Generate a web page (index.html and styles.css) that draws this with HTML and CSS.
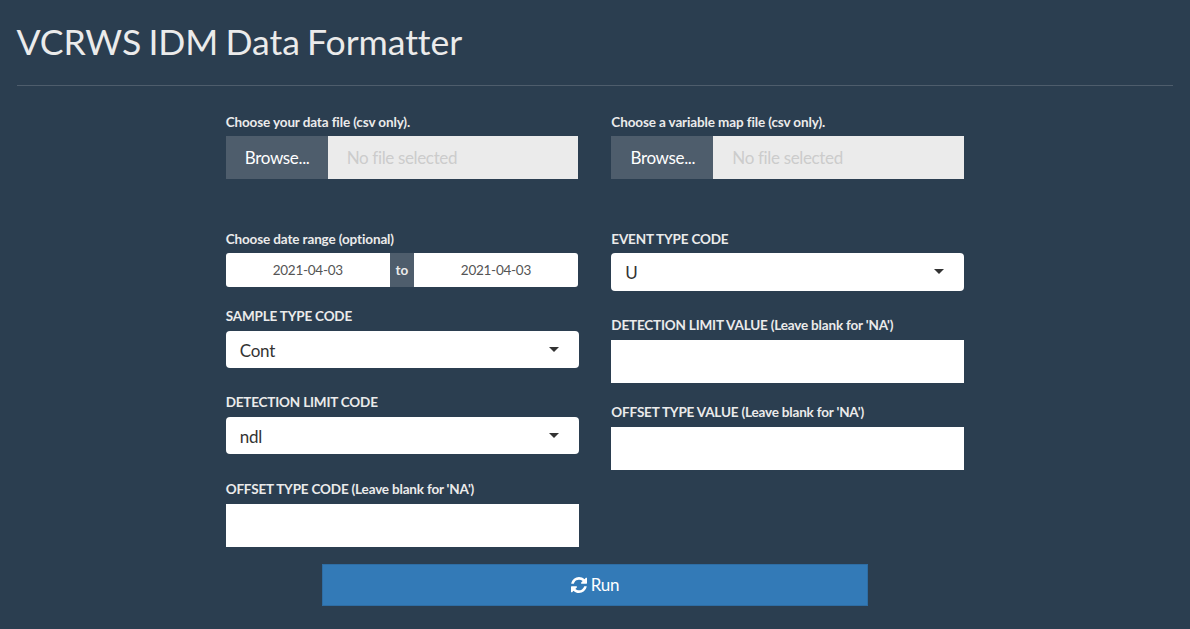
FILE: index.html
```html
<!DOCTYPE html>
<html lang="en">
<head>
<meta charset="utf-8">
<title>VCRWS IDM Data Formatter</title>
<link rel="stylesheet" href="styles.css">
</head>
<body>
<header class="page-header"><h1 class="title">VCRWS IDM Data Formatter</h1></header>
<main class="form">
  <div class="columns">
    <section class="column">
      <div class="field field-file">
        <div class="label">Choose your data file (csv only).</div>
        <div class="file"><span class="browse">Browse...</span><span class="filename">No file selected</span></div>
      </div>
      <div class="field field-dates">
        <div class="label">Choose date range (optional)</div>
        <div class="dates"><span class="date date-start">2021-04-03</span><span class="to">to</span><span class="date date-end">2021-04-03</span></div>
      </div>
      <div class="field">
        <div class="label label-code">SAMPLE TYPE CODE</div>
        <div class="select"><span>Cont</span><i class="caret"></i></div>
      </div>
      <div class="field field-limit">
        <div class="label label-code">DETECTION LIMIT CODE</div>
        <div class="select"><span>ndl</span><i class="caret"></i></div>
      </div>
      <div class="field">
        <div class="label label-code">OFFSET TYPE CODE (Leave blank for 'NA')</div>
        <div class="text-input"></div>
      </div>
    </section>
    <section class="column">
      <div class="field field-file">
        <div class="label">Choose a variable map file (csv only).</div>
        <div class="file"><span class="browse">Browse...</span><span class="filename">No file selected</span></div>
      </div>
      <div class="field field-event">
        <div class="label label-code">EVENT TYPE CODE</div>
        <div class="select"><span>U</span><i class="caret"></i></div>
      </div>
      <div class="field field-limit">
        <div class="label label-code">DETECTION LIMIT VALUE (Leave blank for 'NA')</div>
        <div class="text-input"></div>
      </div>
      <div class="field">
        <div class="label label-code">OFFSET TYPE VALUE (Leave blank for 'NA')</div>
        <div class="text-input"></div>
      </div>
    </section>
  </div>
  <button class="run" type="button">
    <svg class="run-icon" viewBox="0 0 1536 1536"><path fill="currentColor" d="M1511 928q0 5-1 7-64 268-268 434.5t-478 166.5q-146 0-282.500-55t-243.500-157l-129 129q-19 19-45 19t-45-19-19-45v-448q0-26 19-45t45-19h448q26 0 45 19t19 45-19 45l-137 137q71 66 161 102t187 36q134 0 250-65t186-179q11-17 53-117 8-23 30-23h192q13 0 22.500 9.500t9.500 22.500zm25-800v448q0 26-19 45t-45 19h-448q-26 0-45-19t-19-45 19-45l138-138q-148-137-349-137-134 0-250 65t-186 179q-11 17-53 117-8 23-30 23h-199q-13 0-22.500-9.500t-9.500-22.500v-7q65-268 270-434.500t480-166.500q146 0 284 55.500t245 156.500l130-129q19-19 45-19t45 19 19 45z"/></svg>
    <span>Run</span>
  </button>
</main>
</body>
</html>
```
FILE: styles.css
```css
* { box-sizing: border-box; }
body {
  margin: 0;
  height: 629px;
  overflow: hidden;
  background: #2b3e50;
  color: #ebebeb;
  font-family: Lato, "Liberation Sans", sans-serif;
  font-size: 14px;
}
.page-header {
  height: 86px;
  margin: 0 17px;
  padding-top: 21px;
  border-bottom: 1px solid #4e5d6c;
}
.title {
  margin: 0 0 0 -0.5px;
  font-size: 35.6px; line-height: 42px; font-weight: 400;
  letter-spacing: -0.06px; word-spacing: -1.8px;
}
.form { width: 738.7px; margin: 26px auto 0; }
.columns { display: flex; gap: 32.7px; height: 451.5px; }
.column { flex: 1; }
.field { height: 86px; }
.field-file { height: 117px; }
.field-dates { height: 77px; }
.field-limit { height: 87px; }
.label {
  height: 24px; line-height: 20px;
  font-size: 13.5px; font-weight: 700; letter-spacing: -0.12px; white-space: nowrap;
}
.label-code { height: 25px; letter-spacing: -0.18px; }
.field-event .label { height: 24px; }
.file { display: flex; width: 352.3px; height: 43px; font-size: 17px; line-height: 44px; letter-spacing: -0.35px; }
.browse { width: 102px; padding-left: 1px; text-align: center; background: #4e5d6c; color: #fff; }
.filename { flex: 1; padding-left: 19px; background: #ebebeb; color: #ccc; }
.dates { display: flex; width: 352.3px; height: 34px; line-height: 35px; }
.date { flex: 1; text-align: center; background: #fff; color: #555; font-size: 13.5px; letter-spacing: -0.25px; }
.date-start { border-radius: 3px 0 0 3px; }
.date-end { border-radius: 0 3px 3px 0; }
.to { width: 24px; text-align: center; background: #4e5d6c; font-size: 13.5px; font-weight: 700; }
.select {
  display: flex; align-items: center; justify-content: space-between;
  height: 37px; padding: 1px 20px 0 14px;
  border-radius: 4px; background: #fff; color: #333; font-size: 17px; letter-spacing: -0.2px;
}
.field-event .select { height: 38px; }
.caret { margin-bottom: 2px; border: 5px solid transparent; border-top-color: #333; border-bottom: 0; }
.text-input { height: 43px; background: #fff; }
.run {
  display: flex; align-items: center; justify-content: center; gap: 4px;
  width: 546px; height: 42px; margin: 0 auto; padding: 0;
  border: 1px solid #2e6da4; background: #337ab7; color: #fff;
  font-family: inherit; font-size: 17px; letter-spacing: -0.2px;
}
.run-icon { width: 16px; height: 16px; }
```
